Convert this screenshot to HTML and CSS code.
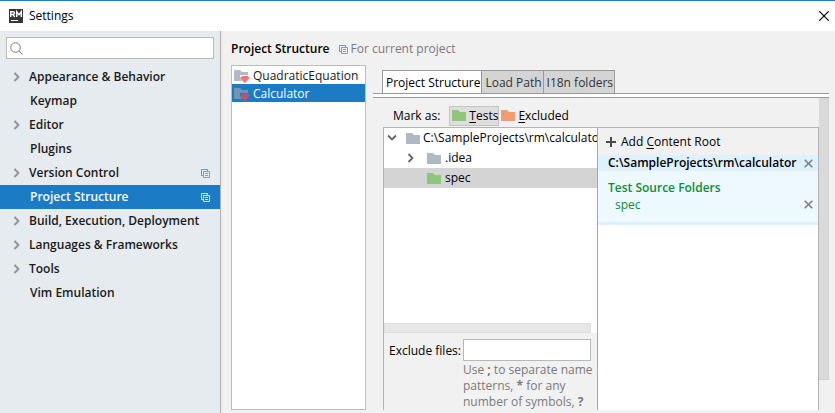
FILE: index.html
```
<!DOCTYPE html>
<html lang="en">
<head>
<meta charset="utf-8">
<title>Settings</title>
<link rel="stylesheet" href="styles.css">
</head>
<body>
<svg class="defs" aria-hidden="true">
  <symbol id="chevron" viewBox="0 0 8 10"><path d="M1.5 1L5.5 5L1.5 9" fill="none" stroke="currentColor" stroke-width="1.8"/></symbol>
  <symbol id="chevron-down" viewBox="0 0 10 8"><path d="M1 1.5L5 5.5L9 1.5" fill="none" stroke="currentColor" stroke-width="1.8"/></symbol>
  <symbol id="folder" viewBox="0 0 14 11"><path d="M0 0H6L8 2H14V11H0Z" fill="currentColor"/></symbol>
  <symbol id="cross" viewBox="0 0 9 9"><path d="M.7 .7L8.3 8.3M8.3 .7L.7 8.3" fill="none" stroke="currentColor" stroke-width="1.6"/></symbol>
  <symbol id="module" viewBox="0 0 16 13"><path d="M0 0H6L8 2H14V5H6V8L8 11H0Z" fill="currentColor"/><path class="gem" d="M8 6H14L15.500 8L11 13H10.500L6 8Z"/></symbol>
  <symbol id="copy" viewBox="0 0 9 9"><path class="copy-back" d="M2 6.500H.5V.5H6.500V2" fill="none"/><path class="copy-front" d="M2.500 2.500H8.500V8.500H2.500ZM4 4.500H7M4 6.500H7" fill="none"/></symbol>
</svg>

<header class="titlebar">
  <svg class="logo" viewBox="0 0 14 14" aria-hidden="true"><path fill="#373737" d="M0 0H14V14H0Z"/><path fill="none" stroke="#fff" stroke-width="1.400" d="M1.700 8V2.700H4.200Q5.500 2.700 5.500 4T4.200 5.500H2M4 5.500L5.700 8M7.700 8V2.700L10 5.800L12.300 2.700V8"/><path fill="#fff" d="M2 11H9V12H2Z"/></svg>
  <h1>Settings</h1>
  <button class="close" aria-label="Close"><svg viewBox="0 0 10 10"><path d="M.3 .3L9.700 9.700M9.700 .3L.3 9.700" fill="none" stroke="#000" stroke-width="1.200"/></svg></button>
</header>

<div class="body">
  <nav class="sidebar">
    <div class="search">
      <svg viewBox="0 0 13 13" aria-hidden="true"><circle cx="5.500" cy="5.500" r="4.800"/><path d="M9 9L12.500 12.500"/></svg>
      <input type="search" aria-label="Search settings">
    </div>
    <ul class="menu">
      <li><a href="#"><svg class="arrow"><use href="#chevron"/></svg>Appearance &amp; Behavior</a></li>
      <li><a href="#" class="leaf">Keymap</a></li>
      <li><a href="#"><svg class="arrow"><use href="#chevron"/></svg>Editor</a></li>
      <li><a href="#" class="leaf">Plugins</a></li>
      <li><a href="#"><svg class="arrow"><use href="#chevron"/></svg>Version Control<svg class="copy end"><use href="#copy"/></svg></a></li>
      <li><a href="#" class="leaf selected" aria-current="page">Project Structure<svg class="copy end"><use href="#copy"/></svg></a></li>
      <li><a href="#"><svg class="arrow"><use href="#chevron"/></svg>Build, Execution, Deployment</a></li>
      <li><a href="#"><svg class="arrow"><use href="#chevron"/></svg>Languages &amp; Frameworks</a></li>
      <li><a href="#"><svg class="arrow"><use href="#chevron"/></svg>Tools</a></li>
      <li><a href="#" class="leaf">Vim Emulation</a></li>
    </ul>
  </nav>

  <main class="main">
    <div class="heading">
      <h2>Project Structure</h2>
      <svg class="copy"><use href="#copy"/></svg>
      <span>For current project</span>
    </div>
    <div class="columns">
      <div class="modules">
        <button><svg><use href="#module"/></svg>QuadraticEquation</button>
        <button class="selected"><svg><use href="#module"/></svg>Calculator</button>
      </div>
      <section class="details">
        <div class="tabs" role="tablist">
          <button class="active" role="tab" aria-selected="true">Project Structure</button>
          <button role="tab" aria-selected="false">Load Path</button>
          <button role="tab" aria-selected="false">I18n folders</button>
        </div>
        <div class="rule"></div>
        <div class="scroller">
          <div class="content">
            <div class="toolbar">
              <span>Mark as:</span>
              <button class="pressed"><svg class="folder green"><use href="#folder"/></svg><span><u>T</u>ests</span></button>
              <button><svg class="folder orange"><use href="#folder"/></svg><span><u>E</u>xcluded</span></button>
            </div>
            <div class="panes">
              <div class="left">
                <div class="tree">
                  <button class="root"><svg class="down"><use href="#chevron-down"/></svg><svg class="folder"><use href="#folder"/></svg>C:\SampleProjects\rm\calculator</button>
                  <button class="child"><svg class="arrow"><use href="#chevron"/></svg><svg class="folder"><use href="#folder"/></svg>.idea</button>
                  <button class="child lone selected"><svg class="folder green"><use href="#folder"/></svg>spec</button>
                  <div class="hbar"></div>
                </div>
                <div class="exclude">
                  <label for="exclude">Exclude files:</label>
                  <div class="field">
                    <input id="exclude" type="text">
                    <p>Use <b>;</b> to separate name<br>patterns, <b>*</b> for any<br>number of symbols, <b>?</b></p>
                  </div>
                </div>
              </div>
              <div class="right">
                <button class="add"><svg viewBox="0 0 10 10"><path d="M4 0H6V4H10V6H6V10H4V6H0V4H4Z" fill="#4b4b4b"/></svg><span>Add <u>C</u>ontent Root</span></button>
                <div class="path"><b>C:\SampleProjects\rm\calculator</b><button aria-label="Remove content root"><svg><use href="#cross"/></svg></button></div>
                <div class="sources">
                  <h3>Test Source Folders</h3>
                  <div class="source"><span>spec</span><button aria-label="Remove spec"><svg><use href="#cross"/></svg></button></div>
                </div>
              </div>
            </div>
          </div>
          <div class="vbar"></div>
        </div>
      </section>
    </div>
  </main>
</div>
</body>
</html>
```
FILE: styles.css
```
* { box-sizing: border-box; }
body {
  margin: 0;
  height: 100vh;
  display: flex;
  flex-direction: column;
  overflow: hidden;
  background: #f1f1f1;
  color: #000;
  font: 12px/16px "Open Sans", "Noto Sans", sans-serif;
}
h1, h2, h3, p, ul { margin: 0; padding: 0; font-size: 12px; }
ul { list-style: none; }
button, input { font: inherit; color: inherit; margin: 0; padding: 0; border: 0; background: none; border-radius: 0; }
button { display: flex; align-items: center; text-align: left; white-space: nowrap; }
input { outline: 0; min-width: 0; }
svg { flex: none; display: block; }
u { text-underline-offset: 2px; }
.defs { position: absolute; width: 0; height: 0; }

.titlebar { flex: none; height: 31px; display: flex; align-items: center; padding: 0 6px 0 9px; background: #fff; border-top: 1px solid #1b7fd0; }
.titlebar h1 { margin-left: 6px; flex: 1; font-weight: 400; }
.logo { width: 14px; height: 14px; }
.close svg { width: 10px; height: 10px; }

.body { flex: 1; min-height: 0; display: flex; }
.sidebar { flex: none; width: 221px; background: #e5ebef; border-right: 1px solid #adadad; }
.search { height: 22px; margin: 6px; display: flex; align-items: center; padding-left: 3px; background: #fff; border: 1px solid #b8b8b8; }
.search svg { width: 13px; height: 13px; fill: none; stroke: #7c7c7c; }
.search input { flex: 1; height: 20px; padding: 0 4px; }
.menu a { height: 24px; display: flex; align-items: center; padding: 0 10px 0 13px; color: #1a1a1a; font-weight: 600; text-decoration: none; }
.menu .leaf { padding-left: 30px; }
.menu .selected { background: #1b7bc4; color: #fff; }
.arrow { width: 8px; height: 10px; color: #8c9093; }
.menu .arrow { margin-right: 8px; }
.copy { width: 9px; height: 9px; }
.copy.end { margin-left: auto; }
.selected .copy { --line: #d4e7f5; }
.copy-back { stroke: var(--line, #5b9fc4); }
.copy-front { stroke: var(--line, #999); }

.main { flex: 1; min-width: 0; display: flex; flex-direction: column; padding: 10px 6px 3px 10px; }
.heading { flex: none; height: 16px; margin-bottom: 8px; display: flex; align-items: center; color: #7a7a7a; }
.heading h2 { color: #000; font-weight: 600; margin-right: 9px; }
.heading .copy { margin-right: 3px; }
.columns { flex: 1; min-height: 0; display: flex; gap: 7px; }
.modules { flex: none; width: 135px; background: #fff; border: 1px solid #bcbcbc; }
.modules button { width: 100%; height: 18px; padding: 2px 0 0 2px; gap: 3px; color: #1a1a1a; }
.modules svg { width: 16px; height: 13px; color: #b0bbc3; }
.modules .selected { background: #1b7bc4; color: #fff; }
.modules .selected svg { color: #6e96b4; --gem: #b9566d; }
.gem { fill: var(--gem, #fd7478); }

.details { flex: 1; min-width: 0; display: flex; flex-direction: column; padding-top: 5px; }
.tabs { flex: none; display: flex; padding-left: 9px; }
.tabs button { height: 23px; padding: 2px 1px 0 3px; background: #d4d4d4; color: #333; border: 1px solid #999; border-width: 1px 1px 0 0; }
.tabs .active { background: #fff; color: #000; border-left-width: 1px; }
.rule { flex: none; height: 5px; background: #fff; border: 1px solid #999; border-width: 1px 0; }
.scroller { flex: 1; min-height: 0; display: flex; padding-left: 10px; }
.content { flex: 1; min-width: 0; display: flex; flex-direction: column; }
.vbar { flex: none; width: 10px; background: #dadada; border: 1px solid #d1d1d1; border-width: 0 1px 1px 0; margin-bottom: 30px; }
.toolbar { flex: none; height: 29px; padding: 6px 0 0 10px; display: flex; align-items: center; }
.toolbar button { height: 20px; padding: 0 2px; gap: 3px; }
.toolbar .pressed { margin-left: 9px; padding: 0 0 0 2px; background: #dedede; border: 1px solid #c4c4c4; }
.folder { width: 14px; height: 11px; color: #afb9c1; }
.green { color: #90c57c; }
.orange { color: #f29c72; }

.panes { flex: 1; min-height: 0; display: flex; border: 1px solid #b4b4b4; border-bottom: 0; }
.left { flex: 214 1 0; min-width: 0; display: flex; flex-direction: column; border-right: 1px solid #a8a8a8; }
.right { flex: 221 1 0; min-width: 0; background: #fff; }
.tree { flex: 1; min-height: 0; display: flex; flex-direction: column; background: #fff; overflow: hidden; }
.tree button { width: 100%; height: 20px; flex: none; overflow: hidden; gap: 4px; }
.tree .root { padding-left: 3px; gap: 3px; }
.tree .child { padding-left: 23px; }
.tree .lone { padding-left: 43px; }
.tree .selected { background: #d4d4d4; }
.tree .arrow { margin-right: 8px; color: #666; }
.down { width: 10px; height: 8px; margin-right: 6px; color: #666; }
.hbar { margin: auto 6px 0 0; flex: none; height: 10px; background: #e7e7e7; border: 1px solid #dedede; }
.exclude { flex: none; display: flex; gap: 2px; padding: 6px 6px 0 5px; }
.exclude label { line-height: 24px; white-space: nowrap; }
.field { flex: 1; min-width: 0; }
.field input { display: block; width: 100%; height: 22px; background: #fff; border: 1px solid #b8b8b8; }
.field p { margin-top: 1px; color: #7a7a7a; white-space: nowrap; }

.add { width: 100%; height: 27px; padding-left: 8px; gap: 5px; background: #f1f1f1; }
.add svg { width: 10px; height: 10px; }
.path { height: 16px; display: flex; align-items: center; justify-content: space-between; padding: 0 5px 0 10px; background: #def1ff; white-space: nowrap; }
.path b, .sources h3 { font-weight: 600; }
.right svg { color: #7e7e7e; }
.path svg, .source svg { width: 9px; height: 9px; }
.sources { padding: 9px 5px 9px 10px; background: #eef8ff; border-bottom: 3px solid #def1ff; color: #0a8f35; }
.source { display: flex; align-items: center; justify-content: space-between; height: 17px; padding-left: 7px; }
```
